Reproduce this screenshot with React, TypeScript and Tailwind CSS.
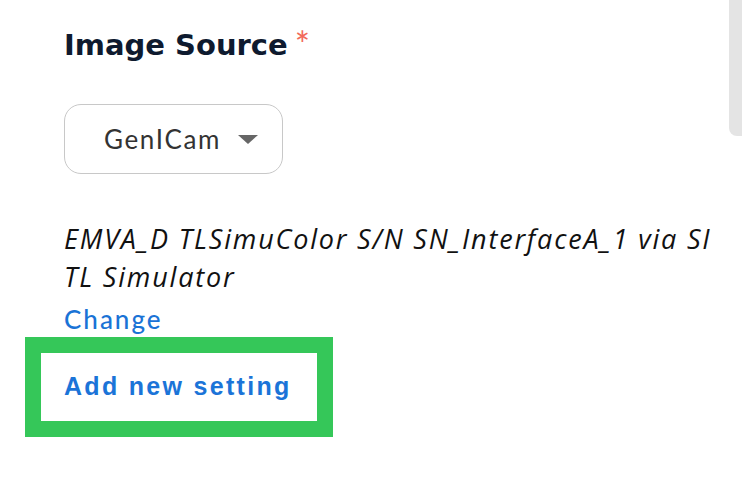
import React from "react";

function Caret() {
    return (
        <svg width="20" height="9" viewBox="0 0 20 9" className="block">
            <path d="M0 0 L20 0 L10 9 Z" fill="#666666" />
        </svg>
    );
}

export default function App() {
    return (
        <div className="relative h-[478px] w-[742px] overflow-hidden bg-white">
            {/* scrollbar thumb */}
            <div className="absolute right-0 top-0 h-[136px] w-[13px] rounded-bl-[8px] bg-[#e4e4e4]" />

            <div className="pl-[64px] pt-[23px]">
                <div className="flex items-start">
                    <span className="font-['DejaVu_Sans',sans-serif] text-[29px] font-bold leading-[44px] text-[#0e1a2f]">
                        Image Source
                    </span>
                    <span className="ml-[7px] mt-[3px] font-['Lato',sans-serif] text-[36px] leading-[36px] text-[#f26a5a]">*</span>
                </div>

                <div className="mt-[37px] flex h-[70px] w-[219px] items-center rounded-[17px] border-[1.5px] border-[#c8c8c8] pl-[39px] pr-[24px] font-['Lato',sans-serif]">
                    <span className="text-[26px] leading-none tracking-[1.6px] text-[#333333]">GenICam</span>
                    <span className="ml-auto">
                        <Caret />
                    </span>
                </div>

                <p className="mt-[46px] w-[654px] font-['Open_Sans',sans-serif] text-[27px] italic leading-[38px] tracking-[1.8px] text-[#111111]">
                    EMVA_D TLSimuColor S/N SN_InterfaceA_1 via SI TL Simulator
                </p>
                <div className="mt-[8px] font-['Lato',sans-serif] text-[26px] font-medium leading-[30px] tracking-[2px] text-[#1a73d6]">
                    Change
                </div>
            </div>

            <div className="ml-[25px] mt-[3px] w-[308px] border-[16px] border-[#35c759] bg-white pl-[23px]">
                <div className="flex h-[68px] items-center font-['Liberation_Sans',Arial,sans-serif] text-[25px] font-bold tracking-[2.3px] text-[#1b74d8]">
                    Add new setting
                </div>
            </div>
        </div>
    );
}
